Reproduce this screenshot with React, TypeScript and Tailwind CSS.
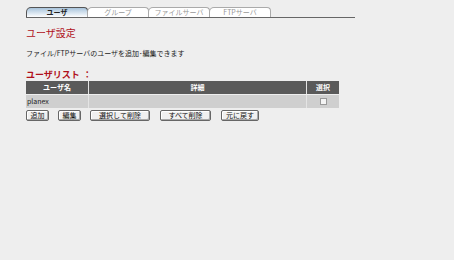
import React from "react";

const font = { fontFamily: '"Noto Sans CJK JP", "Noto Sans", sans-serif' };

function Tab({ label, active }: { label: string; active?: boolean }) {
  return (
    <div
      className={
        "relative h-[10px] w-[62px] -mr-[1px] flex items-center justify-center text-[7px] leading-none rounded-tl-[5px] rounded-tr-[4px] border border-b-0 " +
        (active
          ? "border-[#555] bg-gradient-to-b from-[#a9c4dc] to-[#ffffff] text-[#222] font-bold"
          : "border-[#aaa] bg-white text-[#999]")
      }
    >
      {label}
    </div>
  );
}

function Btn({ label, w }: { label: string; w: string }) {
  return (
    <div
      className={
        "h-[11px] flex items-center justify-center text-[7px] leading-none text-[#111] bg-[#f0f0f0] border border-[#666] rounded-[2px] shadow-[inset_-1px_-1px_0_#aaa,inset_1px_1px_0_#fff] " +
        w
      }
    >
      {label}
    </div>
  );
}

export default function App() {
  return (
    <div className="w-[454px] h-[260px] bg-[#eeeeee] pl-[26px] pt-[7px]" style={font}>
      <div className="flex items-end w-[329px] border-b border-[#666]">
        <Tab label="ユーザ" active />
        <Tab label="グループ" />
        <Tab label="ファイルサーバ" />
        <Tab label="FTPサーバ" />
      </div>
      <div className="mt-[9px] text-[10px] leading-[12px] text-[#b0101a]">ユーザ設定</div>
      <div className="mt-[10px] text-[7px] leading-[9px] text-[#222]">
        ファイル/FTPサーバのユーザを追加･編集できます
      </div>
      <div className="mt-[11px] flex items-center text-[9px] leading-[12px] font-bold text-[#b0101a]">
        <span>ユーザリスト</span>
        <span className="ml-[3px]">：</span>
      </div>
      <div className="w-[313px]">
        <div className="flex h-[13px] gap-[1px] bg-[#e4e4e4]">
          <div className="w-[62px] bg-[#5a5a5a] text-white text-[7px] font-bold flex items-center justify-center">
            ユーザ名
          </div>
          <div className="flex-1 bg-[#5a5a5a] text-white text-[7px] font-bold flex items-center justify-center">
            詳細
          </div>
          <div className="w-[32px] bg-[#5a5a5a] text-white text-[7px] font-bold flex items-center justify-center">
            選択
          </div>
        </div>
        <div className="flex h-[13px] gap-[1px] mt-[1px] bg-[#e4e4e4]">
          <div className="w-[62px] bg-[#cfcfcf] text-[#222] text-[7px] flex items-center pl-[1px]">
            planex
          </div>
          <div className="flex-1 bg-[#cfcfcf]" />
          <div className="w-[32px] bg-[#cfcfcf] flex items-center justify-center">
            <div className="w-[7px] h-[7px] bg-[#f4f4f4] border border-[#999]" />
          </div>
        </div>
      </div>
      <div className="flex mt-[2px]">
        <Btn label="追加" w="w-[23px]" />
        <div className="w-[9px]" />
        <Btn label="編集" w="w-[23px]" />
        <div className="w-[9px]" />
        <Btn label="選択して削除" w="w-[60px]" />
        <div className="w-[10px]" />
        <Btn label="すべて削除" w="w-[51px]" />
        <div className="w-[10px]" />
        <Btn label="元に戻す" w="w-[38px]" />
      </div>
    </div>
  );
}
